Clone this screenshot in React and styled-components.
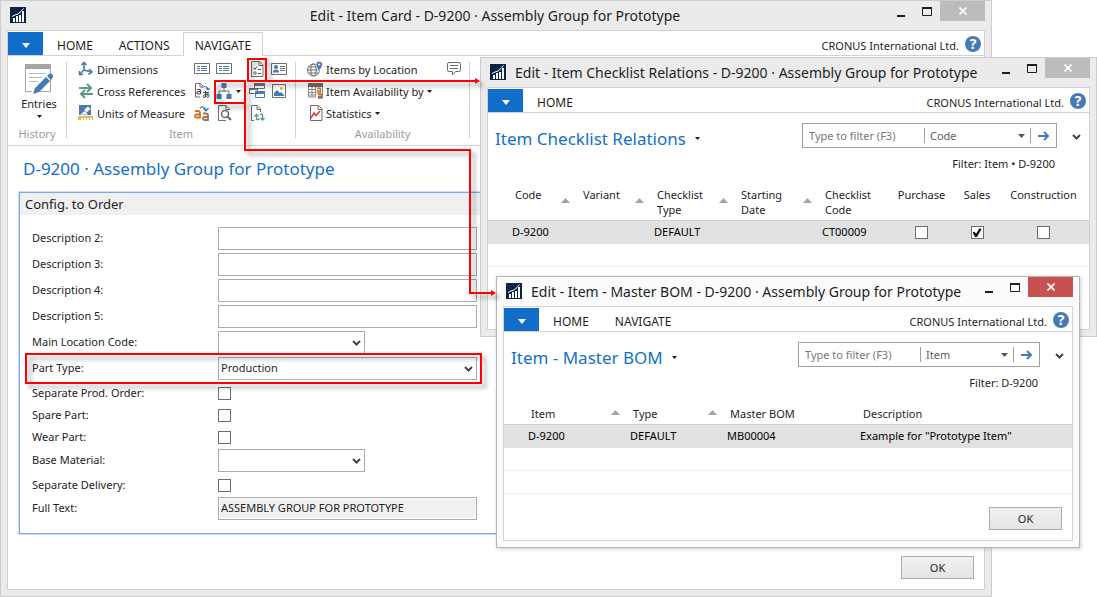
import React, { useId } from "react";
import styled, { createGlobalStyle, css } from "styled-components";

const GlobalStyle = createGlobalStyle`
  *, *::before, *::after { box-sizing: border-box; }
  body {
    margin: 0;
    background: #fff;
    color: #1e1e1e;
    font: 11px/15px "Noto Sans", "Open Sans", sans-serif;
  }
  button, input, select { font: inherit; color: inherit; }
  button { cursor: pointer; }
`;

const Desktop = styled.div`
  position: relative;
  min-height: 100vh;
  min-width: 1000px;
  overflow: hidden;
`;

/* ---------- window frame ---------- */

const Frame = styled.section`
  display: flex;
  flex-direction: column;
  padding: 0 6px 6px;
  border: 1px solid ${(p) => (p.$active ? "#b4b4b4" : "#cdcdcd")};
  background: ${(p) => (p.$active ? "#fbfbfb" : "#ebebeb")};
  box-shadow: ${(p) => (p.$active ? "1px 1px 4px rgba(0, 0, 0, 0.2)" : "none")};
`;

const MainFrame = styled(Frame)`
  min-height: 100vh;
  margin-right: 105px;
`;

const ChecklistFrame = styled(Frame)`
  position: absolute;
  top: 57px;
  left: 480px;
  right: 0;
  min-height: 280px;
`;

const BomFrame = styled(Frame)`
  position: absolute;
  top: 276px;
  left: 496px;
  right: 17px;
`;

const TitleBar = styled.header`
  display: flex;
  height: 29px;
  padding-left: 3px;
  gap: 9px;
`;

const AppIcon = styled.svg`
  flex: none;
  width: 16px;
  height: 16px;
  margin-top: 6px;
`;

const WindowTitle = styled.h1`
  flex: 1;
  min-width: 0;
  margin: 0;
  padding-left: ${(p) => (p.$center ? "76px" : "0")};
  font-size: 14px;
  font-weight: 400;
  line-height: 29px;
  text-align: ${(p) => (p.$center ? "center" : "left")};
  white-space: nowrap;
`;

const WindowControls = styled.div`
  display: flex;
  align-items: flex-start;
`;

const WindowButton = styled.button`
  display: flex;
  align-items: center;
  justify-content: center;
  width: 26px;
  height: 20px;
  padding: 0;
  border: 0;
  background: none;
`;

const CloseButton = styled(WindowButton)`
  width: 45px;
  background: ${(p) => (p.$active ? "#c75050" : "#bcbcbc")};
`;

const Client = styled.div`
  flex: 1;
  display: flex;
  flex-direction: column;
  border: 1px solid #d2d2d2;
  background: #fff;
`;

function AppWindow({ frame: Shell, title, active, centered, children }) {
  return (
    <Shell $active={active} aria-label={title}>
      <TitleBar>
        <AppIcon viewBox="0 0 16 16" aria-hidden="true">
          <rect width="16" height="16" fill="#0b2349" />
          <path d="M3 15v-4h2v4zM6 15V9h2v6zM9 15V8h2v7zM12 15V4h2v11z" fill="#fff" />
          <path d="M2 9.500l3-1.500 3-1 3-2.500 2.500-3" stroke="#fff" fill="none" />
        </AppIcon>
        <WindowTitle $center={centered}>{title}</WindowTitle>
        <WindowControls>
          <WindowButton aria-label="Minimize">
            <svg width="8" height="16"><path d="M0 12h8v2H0z" fill="#1e1e1e" /></svg>
          </WindowButton>
          <WindowButton aria-label="Maximize">
            <svg width="10" height="9"><path d="M.5 1v7.500h9V1" fill="none" stroke="#1e1e1e" /><path d="M0 0h10v2H0z" fill="#1e1e1e" /></svg>
          </WindowButton>
          <CloseButton $active={active} aria-label="Close">
            <svg width="8" height="8"><path d="M.5.500l7 7M7.500.500l-7 7" stroke="#fff" strokeWidth="1.700" /></svg>
          </CloseButton>
        </WindowControls>
      </TitleBar>
      <Client>{children}</Client>
    </Shell>
  );
}

/* ---------- tabs ---------- */

const TabBar = styled.nav`
  display: flex;
  height: 25px;
  padding-top: 1px;
  border-bottom: 1px solid #d2d2d2;
`;

const FileTab = styled.button`
  width: 35px;
  margin-right: 1px;
  padding: 0;
  border: 0;
  background: #106ec8;
`;

const Tab = styled.button`
  height: 24px;
  padding: 2px ${(p) => (p.$current ? "11px" : "12px")} 0;
  border: 1px solid transparent;
  border-bottom: 0;
  background: none;
  font-size: 12px;
  white-space: nowrap;
  ${(p) =>
    p.$current &&
    css`
      border-color: #d2d2d2;
      background: #fff;
    `}
`;

const Company = styled.div`
  display: flex;
  align-items: center;
  gap: 6px;
  margin-left: auto;
  padding-right: 3px;
`;

const CompanyName = styled.span`
  padding-top: 3px;
`;

const HelpButton = styled.button`
  width: 16px;
  height: 16px;
  padding: 0;
  border: 0;
  border-radius: 50%;
  background: #457ab4;
  color: #fff;
  font-size: 14px;
  font-weight: 700;
  line-height: 16px;
`;

function Tabs({ names, current }) {
  return (
    <TabBar>
      <FileTab aria-label="Application menu">
        <svg width="8" height="5"><path d="M0 0h8L4 5z" fill="#fff" /></svg>
      </FileTab>
      {names.map((name) => (
        <Tab key={name} $current={name === current}>{name}</Tab>
      ))}
      <Company>
        <CompanyName>CRONUS International Ltd.</CompanyName>
        <HelpButton aria-label="Help">?</HelpButton>
      </Company>
    </TabBar>
  );
}

/* ---------- ribbon ---------- */

const GREY = "#6d6d6d";
const BLUE = "#457ab4";
const GREEN = "#5d9a81";
const ORANGE = "#d9731a";

const icons = {
  dimensions: (
    <g fill="none" stroke={BLUE} strokeWidth="1.600">
      <path d="M6 2v7L2 13M6 9l7 2" />
      <path d="M3.500 4L6 1.500 8.500 4M1.500 10v3.500H5M11 8l3 3-3.500 2.500" />
    </g>
  ),
  cross: (
    <g fill="none" stroke={GREEN} strokeWidth="2">
      <path d="M1 5h11M15 11H4" />
      <path d="M9 1l4 4-4 4M7 7l-4 4 4 4" />
    </g>
  ),
  units: (
    <g>
      <path d="M1 0h12v10H1z" fill={BLUE} />
      <path d="M6 5l4-3.500L12.500 4 9 7zM2 9.500L7 6l3 3.500z" fill="#fff" />
      <path d="M0 11h15v4h-1v-2h-2v2h-1v-2H9v2H8v-2H6v2H5v-2H3v2H0z" fill="#e8b75c" />
    </g>
  ),
  list: (
    <g>
      <path d="M.5 2.500h15v10H.5z" fill="#fff" stroke={GREY} />
      <path d="M3 5h3v1H3zM3 7h3v1H3zM3 9h3v1H3zM7 5h6v1H7zM7 7h6v1H7zM7 9h6v1H7z" fill={BLUE} />
    </g>
  ),
  translate: (
    <g fill="none">
      <path d="M1.500 14V.500h5L9 3v2M6 .500V4h3M1.500 14H6" stroke={GREY} />
      <path d="M3 6.500h2.500q1 0 1 1V11M6.500 8.500H4q-1 0-1 1.200T4 11h2.500" stroke="#444" strokeWidth="1.200" />
      <path d="M10 3.500q4 0 4 3M12 5l2 2 2-2" stroke={BLUE} strokeWidth="1.200" />
      <path d="M9 9.500h6M11.500 8v6M14 10.500q-1 4-4 4-1.500-.500-.5-2 1.500-2 4-1.500 2 .500 1.500 2.200-.500 1.300-2 1.300" stroke="#444" />
    </g>
  ),
  tree: (
    <g>
      <path d="M8 5v4M3 11V8h10v3" stroke={GREY} fill="none" />
      <path d="M5.500 0h5v5h-5zM.5 11h5v5h-5zM10.500 11h5v5h-5z" fill={BLUE} />
    </g>
  ),
  checklist: (
    <g fill="none">
      <path d="M2.500.500h8L14 4v11.500H2.500zM10 .500V4.500h4" stroke={GREY} />
      <path d="M4.500 7l1.200 1.500L8 5.500M9 8.500h3M9 12.500h3" stroke="#444" />
      <circle cx="6" cy="12" r="1.200" stroke={GREY} />
    </g>
  ),
  contact: (
    <g>
      <path d="M.5 2.500h15v11H.5z" fill="#fff" stroke={GREY} />
      <circle cx="5" cy="6" r="2" fill={BLUE} />
      <path d="M2 11.500q0-3 3-3t3 3z" fill={BLUE} />
      <path d="M9 5h5v1H9zM9 7h5v1H9zM9 9h5v1H9z" fill={GREY} />
    </g>
  ),
  windows: (
    <g>
      <path d="M5.500.500h10v5h-10z" fill="#fff" stroke={GREY} />
      <path d="M5 0h11v3H5z" fill={GREY} />
      <path d="M.5 5.500h8v5h-8z" fill="#fff" stroke={GREY} />
      <path d="M0 5h9v2H0z" fill={GREY} />
      <path d="M6.500 8.500h9v6h-9z" fill="#fff" stroke={BLUE} />
      <path d="M6 8h10v3H6z" fill={BLUE} />
    </g>
  ),
  picture: (
    <g>
      <path d="M1.500 1.500v13h13v-13z" fill="#fff" stroke={GREY} />
      <path d="M3 13v-3l3-3 3 3 1-1 3 3v1z" fill={BLUE} />
      <circle cx="10.500" cy="5.500" r="1.500" fill="#e8a650" />
    </g>
  ),
  substitute: (
    <g fill="none" strokeWidth="1.800">
      <path d="M1 6h3q2 0 2 2v4.500H2.500q-1.500 0-1.500-1.500t1.500-1.500H6" stroke={ORANGE} />
      <path d="M9 8.500h3q2 0 2 2V15h-3.500Q9 15 9 13.500T10.500 12H14" stroke="#a5714b" />
      <path d="M6 3q4-3 6 2M9.500 3.500L12 6l2.500-3" stroke={BLUE} strokeWidth="1.300" />
    </g>
  ),
  preview: (
    <g fill="none" stroke={GREY}>
      <path d="M13.500 5V4L10 .500H2.500v15H10M10 .500V4.500h3.500" />
      <circle cx="9" cy="9" r="3.500" strokeWidth="1.600" fill="#fff" />
      <path d="M11.500 11.500L15 15" strokeWidth="2.200" />
    </g>
  ),
  refresh: (
    <g fill="none">
      <path d="M2.500 15.500V.500H8L11.500 4v3M8 .500V4.500h3.500M2.500 15.500H5" stroke={GREY} />
      <path d="M7.500 15V10M5.500 11.500l2-2 2 2M7.500 14.500q2 .500 3-1" stroke={GREEN} strokeWidth="1.400" />
      <path d="M13.500 9v5.500M11.500 13l2 2 2-2M13.500 9.500q-1-1-2.500 0" stroke={GREEN} strokeWidth="1.400" />
    </g>
  ),
  globe: (
    <g fill="none" stroke={GREY}>
      <circle cx="6.500" cy="9" r="6" />
      <ellipse cx="6.500" cy="9" rx="2.700" ry="6" />
      <path d="M.5 9h12M1.500 6h10M1.500 12h10" />
      <path d="M12 10q-3-4-3-6.500a3.200 3.200 0 0 1 6.400 0Q15.400 6 12 10z" fill={BLUE} stroke="#fff" strokeWidth=".6" />
      <circle cx="12.200" cy="3.500" r="1.100" fill="#fff" stroke="none" />
    </g>
  ),
  calendar: (
    <g fill="none">
      <path d="M1.500 1.500h14V14h-14zM5 2v12M8.500 2v12M12 2v5M2 6.500h13M2 9.500h8M2 12h7" stroke="#8a8a8a" />
      <path d="M1 0h15v4H1z" fill={GREY} />
      <path d="M9 5h6v11H9z" fill="#fff" />
      <path d="M10 5.500h3.500V10H10.500V8H13" stroke={ORANGE} strokeWidth="1.300" />
      <path d="M11 11.500h4V15h-3.500v-1.500H15" stroke="#a5714b" strokeWidth="1.300" />
    </g>
  ),
  statistics: (
    <g fill="none">
      <path d="M3.500.500h8L15 4v11.500H3.500zM11 .500V4.500h4" stroke={GREY} />
      <path d="M4 13l3-5 2 2.500L13 6" stroke="#d23b2a" strokeWidth="1.500" />
    </g>
  ),
  comment: (
    <g fill="none" stroke={GREY}>
      <path d="M3 1.500h10q1.500 0 1.500 1.500v6q0 1.500-1.500 1.500H9.500L6.500 14v-3.500H3q-1.500 0-1.500-1.500V3q0-1.500 1.500-1.500z" />
      <path d="M4 4.500h8M4 7.500h8" />
    </g>
  ),
};

const Glyph = styled.svg`
  flex: none;
  width: 16px;
  height: 16px;
`;

const Icon = ({ name }) => (
  <Glyph viewBox="0 0 16 16" aria-hidden="true">{icons[name]}</Glyph>
);

const Caret = () => (
  <svg width="5" height="3" aria-hidden="true"><path d="M0 0h5L2.500 3z" fill="#1e1e1e" /></svg>
);

const Ribbon = styled.div`
  display: flex;
  height: 90px;
  padding: 6px 0 3px;
  border-bottom: 1px solid #d2d2d2;
`;

const Group = styled.div`
  display: flex;
  flex-direction: column;
  justify-content: space-between;
  width: ${(p) => p.$width};
  margin-bottom: 4px;
  border-right: 1px solid #d2d2d2;
`;

const GroupName = styled.div`
  color: #9b9b9b;
  line-height: 8px;
  text-align: center;
`;

const GroupGrid = styled.div`
  display: grid;
  grid-template-columns: ${(p) => p.$columns};
  grid-auto-rows: 22px;
  margin-top: -4px;
  padding-left: 10px;
`;

const RibbonButton = styled.button`
  display: flex;
  align-items: center;
  gap: 4px;
  padding: 0 2px;
  border: 0;
  background: none;
  white-space: nowrap;
`;

const CommandButton = styled(RibbonButton)`
  padding-left: 1px;
  gap: 3px;
`;

const LargeButton = styled.button`
  display: flex;
  flex-direction: column;
  align-items: center;
  padding: 2px 0 0 4px;
  border: 0;
  background: none;
`;

const LargeLabel = styled.span`
  margin: 0 0 4px;
`;

const iconGrid = [
  ["list", "List"], ["list", "Extended texts"], ["checklist", "Checklist"], ["contact", "Contact"],
  ["translate", "Translations"], ["tree", "Master BOM", true], ["windows", "Windows"], ["picture", "Picture"],
  ["substitute", "Substitutions"], ["preview", "Preview"], ["refresh", "Refresh"],
];
const textCommands = [["dimensions", "Dimensions"], ["cross", "Cross References"], ["units", "Units of Measure"]];

function NavigateRibbon() {
  return (
    <Ribbon>
      <Group $width="59px">
        <LargeButton>
          <svg width="28" height="32" viewBox="0 0 28 32" aria-hidden="true">
            <path d="M.5.500h25v27H.5z" fill="#fff" stroke="#a5a5a5" />
            <path d="M0 0h26v5H0z" fill="#a5a5a5" />
            <path d="M4 9.500h18M4 13.500h13M4 17.500h9" stroke="#b9b9b9" />
            <path d="M6 31l3-9L22 8l6 4-15 17z" fill="#fff" />
            <path d="M8 30l2-6L21 13l4 4-11 11zM22 12l2-2q2-1 3 0t1 3l-2 3z" fill={BLUE} />
          </svg>
          <LargeLabel>Entries</LargeLabel>
          <Caret />
        </LargeButton>
        <GroupName>History</GroupName>
      </Group>
      <Group $width="229px">
        <GroupGrid $columns="115px 22px 33px 22px 22px">
          {textCommands.map(([icon, label], row) => (
            <React.Fragment key={label}>
              <CommandButton><Icon name={icon} />{label}</CommandButton>
              {iconGrid.slice(row * 4, row * 4 + 4).map(([name, hint, menu]) => (
                <RibbonButton key={hint} aria-label={hint}>
                  <Icon name={name} />
                  {menu && <Caret />}
                </RibbonButton>
              ))}
            </React.Fragment>
          ))}
        </GroupGrid>
        <GroupName>Item</GroupName>
      </Group>
      <Group $width="174px">
        <GroupGrid $columns="138px 22px">
          <CommandButton><Icon name="globe" />Items by Location</CommandButton>
          <RibbonButton aria-label="Comments"><Icon name="comment" /></RibbonButton>
          <CommandButton><Icon name="calendar" />Item Availability by<Caret /></CommandButton>
          <span />
          <CommandButton><Icon name="statistics" />Statistics<Caret /></CommandButton>
        </GroupGrid>
        <GroupName>Availability</GroupName>
      </Group>
    </Ribbon>
  );
}

/* ---------- item card ---------- */

const CardBody = styled.main`
  padding: 10px 11px;
`;

const PageTitle = styled.h2`
  margin: 0;
  color: #1570c8;
  font-size: 17px;
  font-weight: 400;
  line-height: 25px;
  white-space: nowrap;
`;

const CardTitle = styled(PageTitle)`
  padding: 0 0 11px 4px;
`;

const FastTab = styled.section`
  border: 1px solid #7aa9ee;
  outline: 1px solid #c9ddf9;
  padding-bottom: 10px;
`;

const FastTabName = styled.h3`
  margin: 0 0 12px;
  padding: 0 5px;
  background: #f0f0f0;
  font-size: 13px;
  font-weight: 400;
  line-height: 22px;
`;

const FieldRow = styled.div`
  display: flex;
  align-items: center;
  height: ${(p) => (p.$check ? "22px" : "23px")};
  margin-bottom: ${(p) => (p.$check ? "0" : "3px")};
  padding: 0 0 ${(p) => (p.$check ? "1px" : "0")} 12px;
`;

const Label = styled.label`
  flex: none;
  width: 186px;
  padding-bottom: 2px;
`;

const fieldBox = css`
  height: 23px;
  padding: 0 2px 2px;
  border: 1px solid #ababab;
  border-radius: 0;
  background: #fff;
`;

const TextField = styled.input`
  ${fieldBox}
  width: 259px;
  &:read-only {
    background: #f0f0f0;
    box-shadow: inset 0 0 0 1px #fff;
  }
`;

const SelectWrap = styled.div`
  display: grid;
  width: ${(p) => p.$width};
  > * { grid-area: 1 / 1; }
  > svg { align-self: center; justify-self: end; margin-right: ${(p) => p.$inset || "4px"}; pointer-events: none; }
`;

const SelectField = styled.select`
  ${fieldBox}
  appearance: none;
  width: 100%;
`;

const CheckBox = styled.input.attrs({ type: "checkbox" })`
  appearance: none;
  display: inline-grid;
  place-content: center;
  width: 13px;
  height: 13px;
  margin: 0;
  border: 1px solid #6e6e6e;
  background: #fff;
  vertical-align: middle;
  &:checked::before {
    content: "";
    width: 9px;
    height: 9px;
    background: #111;
    clip-path: polygon(0 45%, 22% 38%, 40% 62%, 78% 0, 100% 8%, 48% 100%, 30% 100%);
  }
`;

const Chevron = () => (
  <svg width="9" height="6" aria-hidden="true"><path d="M1 1l3.500 3.500L8 1" fill="none" stroke="#444" strokeWidth="2" /></svg>
);

function Field({ label, kind = "text", value = "" }) {
  const id = useId();
  const selectWidth = kind === "wide" ? "259px" : "147px";
  return (
    <FieldRow $check={kind === "check"}>
      <Label htmlFor={id}>{label}</Label>
      {kind === "text" && <TextField id={id} defaultValue={value} readOnly={Boolean(value)} />}
      {kind === "check" && <CheckBox id={id} />}
      {(kind === "select" || kind === "wide") && (
        <SelectWrap $width={selectWidth}>
          <SelectField id={id}><option>{value}</option></SelectField>
          <Chevron />
        </SelectWrap>
      )}
    </FieldRow>
  );
}

const Footer = styled.footer`
  display: flex;
  justify-content: flex-end;
  padding: ${(p) => p.$top} 10px 10px;
`;

const OkButton = styled.button`
  width: 73px;
  height: 23px;
  padding: 0;
  border: 1px solid #acacac;
  background: linear-gradient(#f1f1f1, #e4e4e4);
`;

/* ---------- list pages ---------- */

const ListHead = styled.div`
  display: flex;
  align-items: flex-start;
  height: 73px;
  padding: 10px 1px 0 7px;
`;

const ListTitle = styled(PageTitle)`
  display: flex;
  align-items: center;
  gap: 9px;
  flex: 1;
  padding-top: 3px;
`;

const FilterArea = styled.div`
  display: flex;
  flex-direction: column;
  align-items: flex-end;
  gap: 8px;
`;

const FilterBar = styled.div`
  display: flex;
  align-items: center;
  height: 25px;
  border: 1px solid #a0a0a0;
  color: #5e5e5e;
`;

const FilterText = styled.span`
  padding-right: 2px;
`;

const FilterInput = styled.input`
  width: 122px;
  padding: 0 6px;
  border: 0;
  border-right: 1px solid #a0a0a0;
  &::placeholder { color: #777; opacity: 1; }
`;

const FilterSelect = styled.select`
  appearance: none;
  width: 100%;
  padding: 0 5px;
  border: 0;
  border-right: 1px solid #a0a0a0;
  background: #fff;
`;

const GoButton = styled.button`
  display: grid;
  place-items: center;
  width: 25px;
  padding: 0;
  border: 0;
  background: none;
`;

const ExpandButton = styled.button`
  width: 15px;
  height: 25px;
  margin: 0 4px 0 12px;
  padding: 0;
  border: 0;
  background: none;
`;

function PageHead({ title, column, selectWidth, filter }) {
  return (
    <ListHead>
      <ListTitle>{title}<Caret /></ListTitle>
      <FilterArea>
        <FilterBar>
          <FilterInput aria-label="Filter" placeholder="Type to filter (F3)" />
          <SelectWrap $width={selectWidth} $inset="6px">
            <FilterSelect aria-label="Filter column"><option>{column}</option></FilterSelect>
            <svg width="7" height="4"><path d="M0 0h7L3.500 4z" fill="#555" /></svg>
          </SelectWrap>
          <GoButton aria-label="Apply filter">
            <svg width="12" height="10"><path d="M0 5h10M6 1l4 4-4 4" fill="none" stroke={BLUE} strokeWidth="2" /></svg>
          </GoButton>
        </FilterBar>
        <FilterText>{filter}</FilterText>
      </FilterArea>
      <ExpandButton aria-label="Expand filter"><Chevron /></ExpandButton>
    </ListHead>
  );
}

const Table = styled.table`
  width: 100%;
  table-layout: fixed;
  border-collapse: separate;
  border-spacing: 0;
`;

const HeadCell = styled.th`
  width: ${(p) => p.$width};
  padding: ${(p) => (p.$center ? "1px 0 3px" : "1px 3px 3px 10px")};
  border-bottom: 1px solid #cfcfcf;
  font-weight: 400;
  text-align: ${(p) => (p.$center ? "center" : "left")};
  vertical-align: top;
  white-space: nowrap;
  &:first-child { padding-left: 27px; }
`;

const HeadContent = styled.div`
  display: flex;
  align-items: flex-start;
  justify-content: space-between;
  white-space: pre-line;
  > svg { margin-top: ${(p) => (p.$low ? "11px" : "4px")}; }
`;

const Row = styled.tr`
  height: 23px;
  background: ${(p) => (p.$selected ? "#e1e1e1" : "#fff")};
  color: #000;
`;

const Cell = styled.td`
  padding: 0 0 1px ${(p) => (p.$center ? "0" : "7px")};
  border-bottom: 1px solid ${(p) => (p.$selected ? "#e1e1e1" : "#ececec")};
  text-align: ${(p) => (p.$center ? "center" : "left")};
  white-space: nowrap;
  &:first-child { padding-left: 24px; }
`;

function List({ columns, blankRows, low }) {
  return (
    <Table>
      <thead>
        <tr>
          {columns.map((c) => (
            <HeadCell key={c.name} $width={c.width} $center={c.check !== undefined}>
              {c.check !== undefined ? c.name : (
                <HeadContent $low={low}>
                  {c.name}
                  {c.sort && <svg width="9" height="5"><path d="M0 5L4.500 0 9 5z" fill="#a3a3a3" /></svg>}
                </HeadContent>
              )}
            </HeadCell>
          ))}
        </tr>
      </thead>
      <tbody>
        <Row $selected>
          {columns.map((c) => (
            <Cell key={c.name} $selected $center={c.check !== undefined}>
              {c.check !== undefined ? <CheckBox aria-label={c.name} defaultChecked={c.check} /> : c.value}
            </Cell>
          ))}
        </Row>
        {Array.from({ length: blankRows }, (_, i) => (
          <Row key={i}><Cell colSpan={columns.length} /></Row>
        ))}
      </tbody>
    </Table>
  );
}

const checklistColumns = [
  { name: "Code", width: "85px", sort: true, value: "D-9200" },
  { name: "Variant", width: "74px", sort: true },
  { name: "Checklist\nType", width: "84px", sort: true, value: "DEFAULT" },
  { name: "Starting\nDate", width: "84px", sort: true },
  { name: "Checklist\nCode", width: "72px", value: "CT00009" },
  { name: "Purchase", width: "69px", check: false },
  { name: "Sales", width: "42px", check: true },
  { name: "Construction", check: false },
];

const bomColumns = [
  { name: "Item", width: "119px", sort: true, value: "D-9200" },
  { name: "Type", width: "97px", sort: true, value: "DEFAULT" },
  { name: "Master BOM", width: "133px", value: "MB00004" },
  { name: "Description", value: 'Example for "Prototype Item"' },
];

/* ---------- red call-outs drawn over the windows ---------- */

const Callouts = styled.svg`
  position: absolute;
  top: 0;
  left: 0;
  pointer-events: none;
  filter: drop-shadow(4px 4px 2px rgba(0, 0, 0, 0.35));
`;

export default function App() {
  return (
    <Desktop>
      <GlobalStyle />
      <AppWindow frame={MainFrame} centered title="Edit - Item Card - D-9200 · Assembly Group for Prototype">
        <Tabs names={["HOME", "ACTIONS", "NAVIGATE"]} current="NAVIGATE" />
        <NavigateRibbon />
        <CardBody>
          <CardTitle>D-9200 · Assembly Group for Prototype</CardTitle>
          <FastTab>
            <FastTabName>Config. to Order</FastTabName>
            <Field label="Description 2:" />
            <Field label="Description 3:" />
            <Field label="Description 4:" />
            <Field label="Description 5:" />
            <Field label="Main Location Code:" kind="select" />
            <Field label="Part Type:" kind="wide" value="Production" />
            <Field label="Separate Prod. Order:" kind="check" />
            <Field label="Spare Part:" kind="check" />
            <Field label="Wear Part:" kind="check" />
            <Field label="Base Material:" kind="select" />
            <Field label="Separate Delivery:" kind="check" />
            <Field label="Full Text:" value="ASSEMBLY GROUP FOR PROTOTYPE" />
          </FastTab>
        </CardBody>
        <Footer $top="12px"><OkButton>OK</OkButton></Footer>
      </AppWindow>

      <AppWindow frame={ChecklistFrame} title="Edit - Item Checklist Relations - D-9200 · Assembly Group for Prototype">
        <Tabs names={["HOME"]} />
        <PageHead title="Item Checklist Relations" column="Code" selectWidth="106px" filter="Filter: Item • D-9200" />
        <List columns={checklistColumns} blankRows={1} low />
      </AppWindow>

      <AppWindow frame={BomFrame} active title="Edit - Item - Master BOM - D-9200 · Assembly Group for Prototype">
        <Tabs names={["HOME", "NAVIGATE"]} />
        <PageHead title="Item - Master BOM" column="Item" selectWidth="93px" filter="Filter: D-9200" />
        <List columns={bomColumns} blankRows={2} />
        <Footer $top="13px"><OkButton>OK</OkButton></Footer>
      </AppWindow>

      <Callouts width="510" height="400" aria-hidden="true">
        <g fill="none" stroke="#f00" strokeWidth="2">
          <path d="M248 59h18v22h-18z" />
          <path d="M266 81h210" />
          <path d="M215 81h30v22h-30z" />
          <path d="M245 103v47h225v143h22" />
          <path d="M26 354h455v29H26z" />
        </g>
        <path d="M475 78l5 3-5 3zM491 290l5 3-5 3z" fill="#f00" />
      </Callouts>
    </Desktop>
  );
}
